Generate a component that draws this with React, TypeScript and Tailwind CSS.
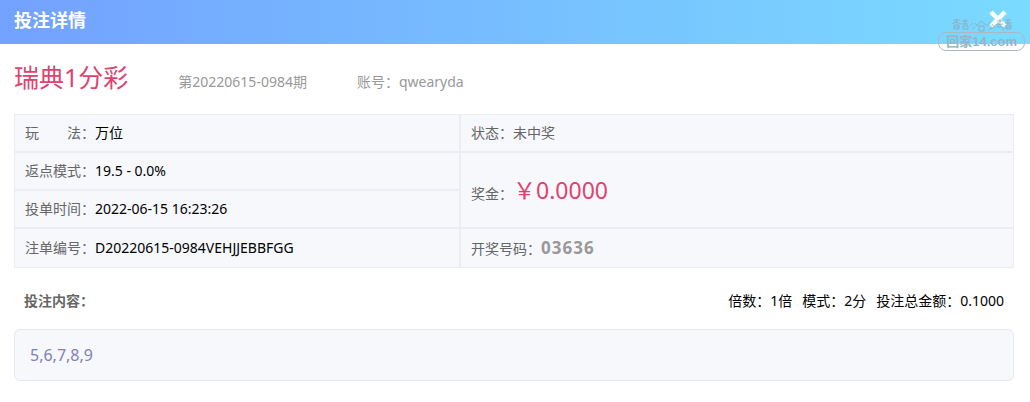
import React from "react";

interface BetDetail {
  game: string;
  issue: string;
  account: string;
  play: string;
  rebate: string;
  time: string;
  orderNo: string;
  status: string;
  prize: string;
  result: string;
  multiple: string;
  mode: string;
  total: string;
  content: string;
}

const detail: BetDetail = {
  game: "瑞典1分彩",
  issue: "20220615-0984",
  account: "qwearyda",
  play: "万位",
  rebate: "19.5 - 0.0%",
  time: "2022-06-15 16:23:26",
  orderNo: "D20220615-0984VEHJJEBBFGG",
  status: "未中奖",
  prize: "0.0000",
  result: "03636",
  multiple: "1倍",
  mode: "2分",
  total: "0.1000",
  content: "5,6,7,8,9",
};

const cell = "border border-[#ebedf2] px-[10px] text-left font-normal";

function Watermark() {
  return (
    <div className="pointer-events-none absolute top-[18px] right-[5px] flex flex-col items-center">
      <svg width="64" height="14" viewBox="0 0 64 14" fill="none" stroke="#8da5b3" strokeWidth="0.8" aria-hidden="true">
        <path d="M3 2h7M6.500 1v4M2 6l4-2 5 2M4 7h5v4H4zM4 9h5M12 3h6M15 1v5M12 6h6M13 8h5v3h-5z" />
        <path d="M20 8l3-3M25 5l2 3M22 11l3-2M31 3l-4 5M31 3l5 4M29 8h5v5h-5zM37 8l3-4M42 6l3 4M39 11l4-1" />
        <path d="M47 3h6M50 1v6M46 7l7-1M47 9h6v4M56 2h5M58 1v5M55 5h7M56 7h5v4h-5zM56 9h5" />
      </svg>
      <div className="rounded-lg border border-[#a9b9c4] px-[7px] font-['Liberation_Sans','Noto_Sans_CJK_SC',sans-serif] text-[13px] leading-[17px] font-bold whitespace-nowrap text-[#9ab3c1]">
        回家14.com
      </div>
    </div>
  );
}

export default function App() {
  return (
    <div className="min-h-screen bg-white font-['Noto_Sans','Noto_Sans_CJK_SC',sans-serif] text-sm text-black">
      <header className="relative flex h-11 items-center justify-between bg-linear-to-r from-[#73a1ff] to-[#7adbff] px-[14px]">
        <h1 className="pb-1 text-lg leading-6 font-bold text-white">投注详情</h1>
        <button type="button" aria-label="关闭" className="mr-2 mb-[6px] text-white">
          <svg width="20" height="20" viewBox="0 0 20 20" fill="none" stroke="currentColor" strokeWidth="4.500" aria-hidden="true">
            <path d="M3 3l14 14M17 3L3 17" />
          </svg>
        </button>
        <Watermark />
      </header>

      <main className="pr-4 pl-[14px]">
        <div className="flex h-[70px] items-baseline pt-[15px] text-[#999]">
          <h2 className="mr-[50px] text-[25px] leading-9 text-[#e0426f]">{detail.game}</h2>
          <span className="mr-[50px]">第{detail.issue}期</span>
          <span>账号：{detail.account}</span>
        </div>

        <table className="w-full table-fixed border-separate border-spacing-0 bg-[#f7f8fc]">
          <colgroup>
            <col className="w-[44.6%]" />
            <col />
          </colgroup>
          <tbody>
            <tr className="h-[38px]">
              <td className={cell}>
                <span className="text-[#666]">玩&emsp;&emsp;法：</span>
                {detail.play}
              </td>
              <td className={cell}>
                <span className="text-[#666]">状态：{detail.status}</span>
              </td>
            </tr>
            <tr className="h-[38px]">
              <td className={cell}>
                <span className="text-[#666]">返点模式：</span>
                {detail.rebate}
              </td>
              <td className={cell} rowSpan={2}>
                <span className="text-[#666]">奖金：</span>
                <span className="text-[23px] leading-8 text-[#e0426f]">￥{detail.prize}</span>
              </td>
            </tr>
            <tr className="h-[38px]">
              <td className={cell}>
                <span className="text-[#666]">投单时间：</span>
                {detail.time}
              </td>
            </tr>
            <tr className="h-10">
              <td className={cell}>
                <span className="text-[#666]">注单编号：</span>
                {detail.orderNo}
              </td>
              <td className={cell}>
                <span className="text-[#666]">开奖号码：</span>
                <strong className="text-[17px] leading-5 tracking-[1px] text-[#999]">{detail.result}</strong>
              </td>
            </tr>
          </tbody>
        </table>

        <div className="flex items-center justify-between px-[10px] pt-[23px] pb-[18px]">
          <h3 className="font-bold text-[#666]">投注内容：</h3>
          <div className="flex gap-[10px]">
            <span>倍数：{detail.multiple}</span>
            <span>模式：{detail.mode}</span>
            <span>投注总金额：{detail.total}</span>
          </div>
        </div>

        <div className="rounded-md border border-[#e6e8ef] bg-[#f7f8fc] px-[15px] py-[13px] text-base text-[#8080b8]">
          {detail.content}
        </div>
      </main>
    </div>
  );
}
